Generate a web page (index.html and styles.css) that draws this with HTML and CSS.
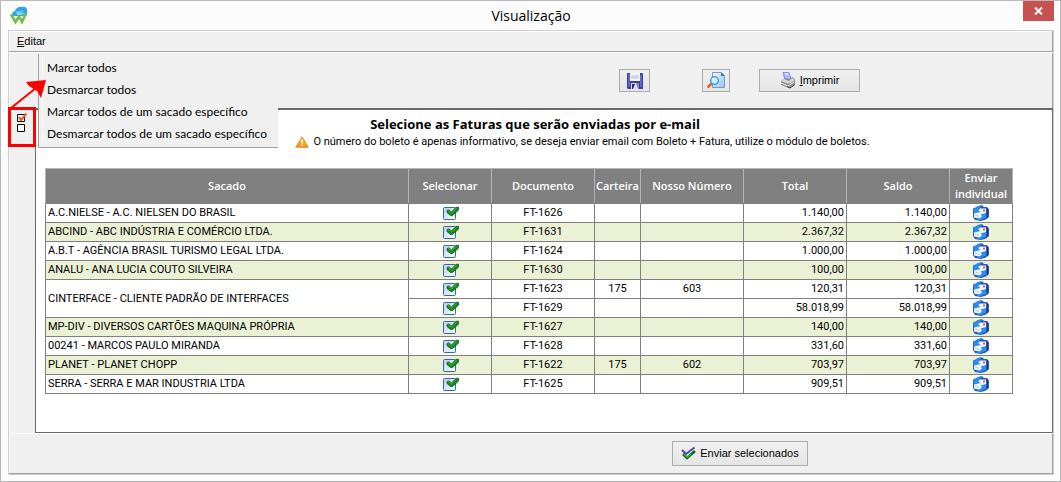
FILE: index.html
```html
<!DOCTYPE html>
<html lang="pt-BR">
<head>
    <meta charset="UTF-8">
    <meta name="viewport" content="width=device-width, initial-scale=1.0">
    <title>Visualização</title>
    <link rel="stylesheet" href="styles.css">
</head>
<body>
    <svg class="symbols" aria-hidden="true">
        <linearGradient id="box-fill" x1="0" y1="0" x2="1" y2="1">
            <stop offset="0" stop-color="#b9cdf0"/>
            <stop offset="1" stop-color="#ffffff"/>
        </linearGradient>
        <linearGradient id="warn-fill" x1="0" y1="0" x2="0" y2="1">
            <stop offset="0" stop-color="#ffc84a"/>
            <stop offset="1" stop-color="#f58a10"/>
        </linearGradient>
        <linearGradient id="page-fill" x1="0" y1="0" x2="1" y2="1">
            <stop offset="0" stop-color="#f4fbff"/>
            <stop offset="1" stop-color="#8cc4f2"/>
        </linearGradient>
        <symbol id="tick" viewBox="0 0 16 14">
            <rect x="0.5" y="1.5" width="12" height="12" rx="1" fill="url(#box-fill)" stroke="#2c6cab"/>
            <path d="M4 4.500L6 3.800L8.500 6L13 1.300H15.700V4L9.500 9.500H7.500L4 6.500Z" fill="#178a1c" stroke="#0c5c12" stroke-width=".8"/>
            <path d="M5 5L6.500 4.800L8.500 7L13.500 2.300" fill="none" stroke="#52b04c" stroke-width=".8"/>
        </symbol>
        <symbol id="mail" viewBox="0 0 16 16">
            <path d="M0 4L5 1L9 .3L11 2L14 2L15.500 4V12L13 14.500L8 16L2 15L0 12Z" fill="#2058c0"/>
            <path d="M1 6L7 3.500L13 3.500V12L8 14L1 12.500Z" fill="#eef5ff"/>
            <path d="M14 3L15.700 4.500V12L14 13.500Z" fill="#17348c"/>
            <path d="M0 2.500L2 3.500C4 1 7 0 9.500 .8C7 2 6 3.500 5.500 5.500L7.500 7L1 8.500Z" fill="#2c8cf0"/>
            <path d="M13 8V13.500L11.500 12.500C9 15.500 6 16 3 14.500C6 14 8 13 9 11L7.500 9.500Z" fill="#2c8cf0"/>
            <path d="M2 10L6 11.500" stroke="#a8c8f4"/>
            <path d="M10 4.500h2v2h-2z" fill="#e0603c"/>
        </symbol>
    </svg>
    <div class="window">
        <div class="title-bar">
            <svg class="logo" width="18" height="18" viewBox="0 0 18 18">
                <path d="M3 10C1 8 3 5 5 5C6 1 10 0 13 1C16 0 18 4 17 6C18 8 17 10 15 10Z" fill="#2fa6e4"/>
                <path d="M6 5C8 7 11 4 14 5L10 7L15 7L12 9H7Z" fill="#8ed2f5"/>
                <path d="M1 8.500L5.500 16L9 10.500L12 16L16 7" fill="none" stroke="#72bf44" stroke-width="2.600"/>
            </svg>
            <h1 class="title">Visualização</h1>
            <button class="close" type="button" aria-label="Fechar">
                <svg width="9" height="8" viewBox="0 0 9 8"><path d="M1 .5L8 7.500M8 .5L1 7.500" stroke="#fff" stroke-width="2"/></svg>
            </button>
        </div>
        <div class="frame">
            <nav class="menu-bar">
                <button class="menu-item" type="button"><u>E</u>ditar</button>
            </nav>
            <div class="toolbar">
                <button class="btn btn-save" type="button" aria-label="Salvar">
                    <svg width="16" height="16" viewBox="0 0 16 16">
                        <path d="M0 0H15L16 1V16H1L0 15Z" fill="#3c3ca8"/>
                        <path d="M1 1H3V14H1ZM13 2H15V14H13Z" fill="#6464d0"/>
                        <path d="M3 0H13V8H3Z" fill="#f4f4fa"/>
                        <path d="M4 3H12M4 5H12" stroke="#b8b8cc"/>
                        <path d="M4 10H12V16H4Z" fill="#dcdcec"/>
                        <path d="M5 11H8L6 16H5Z" fill="#28286c"/>
                        <path d="M9 10H12V16H11Z" fill="#8888b4"/>
                    </svg>
                </button>
                <button class="btn btn-preview" type="button" aria-label="Visualizar">
                    <svg width="18" height="17" viewBox="0 0 18 17">
                        <path d="M5.500 .5H14L17.500 4V15.500H5.500Z" fill="url(#page-fill)" stroke="#7796cc"/>
                        <path d="M14 0V4H18Z" fill="#3a70b8"/>
                        <path d="M4.500 11.500L0.500 15.500" stroke="#d46a1c" stroke-width="2.500"/>
                        <circle cx="7.500" cy="8.500" r="3.800" fill="#c6f0ff" stroke="#4590c8" stroke-width="1.300"/>
                        <path d="M5.500 8L8 6" stroke="#fff" stroke-width="1.500"/>
                    </svg>
                </button>
                <button class="btn btn-print" type="button">
                    <svg width="16" height="17" viewBox="0 0 16 17">
                        <path d="M3 .5H9L11 7L5 8Z" fill="#a9baf8" stroke="#7d90e4"/>
                        <path d="M4 1L8 1L9 4Z" fill="#dfe6ff"/>
                        <path d="M1 9L5 6L10 7L12 5L15 7V12L9 16L1 13Z" fill="#8c8c8c"/>
                        <path d="M1 9L4 7L9 9L12 6L15 8L9 12Z" fill="#d6d6d6"/>
                        <path d="M1 11L8 14L14 10" fill="none" stroke="#f2f2f2"/>
                        <path d="M7 14.500L10 16L15 12.500" fill="none" stroke="#333"/>
                        <path d="M8 12h2" stroke="#58b850"/>
                    </svg>
                    <span><u>I</u>mprimir</span>
                </button>
            </div>
            <div class="workspace">
                <aside class="side">
                    <button class="side-btn" type="button" aria-label="Marcar ou desmarcar">
                        <svg width="10" height="19" viewBox="0 0 10 19">
                            <path d="M.5 1.500H7.500V8.500H.5ZM.5 11.500H7.500V18.500H.5Z" fill="#fff" stroke="#000"/>
                            <path d="M2 4L4 7L9.500 .5" fill="none" stroke="#f05020" stroke-width="2"/>
                        </svg>
                    </button>
                </aside>
                <main class="report">
                    <h2 class="heading">Selecione as Faturas que serão enviadas por e-mail</h2>
                    <p class="note">
                        <svg width="14" height="12" viewBox="0 0 14 12">
                            <path d="M7 .7L13.300 11.300H.7Z" fill="url(#warn-fill)" stroke="#e8941c" stroke-linejoin="round"/>
                            <path d="M7 3.500V7.500M7 8.500V10" stroke="#fff" stroke-width="1.600"/>
                        </svg>
                        <span>O número do boleto é apenas informativo, se deseja enviar email com Boleto + Fatura, utilize o módulo de boletos.</span>
                    </p>
                    <table class="invoices">
                        <colgroup>
                            <col>
                            <col class="col-select">
                            <col class="col-value">
                            <col class="col-wallet">
                            <col class="col-value">
                            <col class="col-value">
                            <col class="col-value">
                            <col class="col-send">
                        </colgroup>
                        <thead>
                            <tr>
                                <th>Sacado</th>
                                <th>Selecionar</th>
                                <th>Documento</th>
                                <th>Carteira</th>
                                <th>Nosso Número</th>
                                <th>Total</th>
                                <th>Saldo</th>
                                <th>Enviar individual</th>
                            </tr>
                        </thead>
                        <tbody>
                            <tr>
                                <td class="name">A.C.NIELSE - A.C. NIELSEN DO BRASIL</td>
                                <td><label class="check"><input type="checkbox" checked aria-label="Selecionar FT-1626"><svg><use href="#tick"/></svg></label></td>
                                <td>FT-1626</td>
                                <td></td>
                                <td></td>
                                <td class="money">1.140,00</td>
                                <td class="money">1.140,00</td>
                                <td><button class="send" type="button" aria-label="Enviar FT-1626"><svg><use href="#mail"/></svg></button></td>
                            </tr>
                            <tr class="alt">
                                <td class="name">ABCIND - ABC INDÚSTRIA E COMÉRCIO LTDA.</td>
                                <td><label class="check"><input type="checkbox" checked aria-label="Selecionar FT-1631"><svg><use href="#tick"/></svg></label></td>
                                <td>FT-1631</td>
                                <td></td>
                                <td></td>
                                <td class="money">2.367,32</td>
                                <td class="money">2.367,32</td>
                                <td><button class="send" type="button" aria-label="Enviar FT-1631"><svg><use href="#mail"/></svg></button></td>
                            </tr>
                            <tr>
                                <td class="name">A.B.T - AGÊNCIA BRASIL TURISMO LEGAL LTDA.</td>
                                <td><label class="check"><input type="checkbox" checked aria-label="Selecionar FT-1624"><svg><use href="#tick"/></svg></label></td>
                                <td>FT-1624</td>
                                <td></td>
                                <td></td>
                                <td class="money">1.000,00</td>
                                <td class="money">1.000,00</td>
                                <td><button class="send" type="button" aria-label="Enviar FT-1624"><svg><use href="#mail"/></svg></button></td>
                            </tr>
                            <tr class="alt">
                                <td class="name">ANALU - ANA LUCIA COUTO SILVEIRA</td>
                                <td><label class="check"><input type="checkbox" checked aria-label="Selecionar FT-1630"><svg><use href="#tick"/></svg></label></td>
                                <td>FT-1630</td>
                                <td></td>
                                <td></td>
                                <td class="money">100,00</td>
                                <td class="money">100,00</td>
                                <td><button class="send" type="button" aria-label="Enviar FT-1630"><svg><use href="#mail"/></svg></button></td>
                            </tr>
                            <tr>
                                <td class="name" rowspan="2">CINTERFACE - CLIENTE PADRÃO DE INTERFACES</td>
                                <td><label class="check"><input type="checkbox" checked aria-label="Selecionar FT-1623"><svg><use href="#tick"/></svg></label></td>
                                <td>FT-1623</td>
                                <td>175</td>
                                <td>603</td>
                                <td class="money">120,31</td>
                                <td class="money">120,31</td>
                                <td><button class="send" type="button" aria-label="Enviar FT-1623"><svg><use href="#mail"/></svg></button></td>
                            </tr>
                            <tr>
                                <td><label class="check"><input type="checkbox" checked aria-label="Selecionar FT-1629"><svg><use href="#tick"/></svg></label></td>
                                <td>FT-1629</td>
                                <td></td>
                                <td></td>
                                <td class="money">58.018,99</td>
                                <td class="money">58.018,99</td>
                                <td><button class="send" type="button" aria-label="Enviar FT-1629"><svg><use href="#mail"/></svg></button></td>
                            </tr>
                            <tr class="alt">
                                <td class="name">MP-DIV - DIVERSOS CARTÕES MAQUINA PRÓPRIA</td>
                                <td><label class="check"><input type="checkbox" checked aria-label="Selecionar FT-1627"><svg><use href="#tick"/></svg></label></td>
                                <td>FT-1627</td>
                                <td></td>
                                <td></td>
                                <td class="money">140,00</td>
                                <td class="money">140,00</td>
                                <td><button class="send" type="button" aria-label="Enviar FT-1627"><svg><use href="#mail"/></svg></button></td>
                            </tr>
                            <tr>
                                <td class="name">00241 - MARCOS PAULO MIRANDA</td>
                                <td><label class="check"><input type="checkbox" checked aria-label="Selecionar FT-1628"><svg><use href="#tick"/></svg></label></td>
                                <td>FT-1628</td>
                                <td></td>
                                <td></td>
                                <td class="money">331,60</td>
                                <td class="money">331,60</td>
                                <td><button class="send" type="button" aria-label="Enviar FT-1628"><svg><use href="#mail"/></svg></button></td>
                            </tr>
                            <tr class="alt">
                                <td class="name">PLANET - PLANET CHOPP</td>
                                <td><label class="check"><input type="checkbox" checked aria-label="Selecionar FT-1622"><svg><use href="#tick"/></svg></label></td>
                                <td>FT-1622</td>
                                <td>175</td>
                                <td>602</td>
                                <td class="money">703,97</td>
                                <td class="money">703,97</td>
                                <td><button class="send" type="button" aria-label="Enviar FT-1622"><svg><use href="#mail"/></svg></button></td>
                            </tr>
                            <tr>
                                <td class="name">SERRA - SERRA E MAR INDUSTRIA LTDA</td>
                                <td><label class="check"><input type="checkbox" checked aria-label="Selecionar FT-1625"><svg><use href="#tick"/></svg></label></td>
                                <td>FT-1625</td>
                                <td></td>
                                <td></td>
                                <td class="money">909,51</td>
                                <td class="money">909,51</td>
                                <td><button class="send" type="button" aria-label="Enviar FT-1625"><svg><use href="#mail"/></svg></button></td>
                            </tr>
                        </tbody>
                    </table>
                </main>
            </div>
            <div class="footer">
                <button class="btn btn-send" type="button">
                    <svg width="15" height="13" viewBox="0 0 15 13">
                        <path d="M1 3L5 7L13.500 .5" fill="none" stroke="#4a48c0" stroke-width="2"/>
                        <path d="M2 7L6 11L14 4" fill="none" stroke="#0c6a14" stroke-width="2.600"/>
                        <path d="M2.500 6.800L6 10.300L10 7" fill="none" stroke="#34c034" stroke-width="1.200"/>
                    </svg>
                    <span>Enviar selecionados</span>
                </button>
            </div>
            <div class="popup">
                <button type="button">Marcar todos</button>
                <button type="button">Desmarcar todos</button>
                <button type="button">Marcar todos de um sacado específico</button>
                <button type="button">Desmarcar todos de um sacado específico</button>
            </div>
            <svg class="pointer" width="40" height="70" viewBox="0 0 40 70">
                <path d="M1.500 29.500H26.500V66.500H1.500Z" fill="none" stroke="#f00" stroke-width="3"/>
                <path d="M3 29L28 9" stroke="#f00" stroke-width="2"/>
                <path d="M38 1L18 3L21 7L29 12L33 19Z" fill="#f00"/>
            </svg>
        </div>
    </div>
</body>
</html>
```
FILE: styles.css
```css
* {
    box-sizing: border-box;
}
body {
    margin: 0;
    font-family: Lato, "Open Sans", sans-serif;
    color: #000;
}
button {
    margin: 0;
    padding: 0;
    border: 0;
    background: none;
    color: inherit;
    font: inherit;
}
svg {
    display: block;
    flex: none;
}
.symbols {
    position: absolute;
    width: 0;
    height: 0;
}
.window {
    display: flex;
    flex-direction: column;
    min-height: 100vh;
    padding: 0 6px 6px 7px;
    border: 1px solid #b9b9b9;
    background: #fcfcfc;
}
.title-bar {
    display: grid;
    grid-template-columns: 31px 1fr 31px;
    height: 29px;
}
.logo {
    margin: 5px 0 0 2px;
}
.title {
    margin: 0;
    font-family: "Open Sans", "Noto Sans", sans-serif;
    font-size: 14px;
    font-weight: normal;
    line-height: 29px;
    text-align: center;
}
.close {
    display: grid;
    place-items: center;
    height: 20px;
    background: #c75050;
}
.frame {
    position: relative;
    display: flex;
    flex: 1;
    flex-direction: column;
    border: 1px solid #cfcfcf;
    background: #f0f0f0;
    box-shadow: inset -1px -1px #a0a0a0, inset 1px 1px #fff;
}
.menu-bar {
    height: 21px;
    border-bottom: 1px solid #a0a0a0;
    padding: 1px 8px 0;
}
.menu-item,
.btn {
    font-family: "Liberation Sans", Arial, sans-serif;
    font-size: 11px;
    line-height: 19px;
    white-space: nowrap;
}
.menu-item {
    display: block;
}
.toolbar {
    display: flex;
    justify-content: flex-end;
    height: 56px;
    padding: 16px 193px 0 0;
    border-top: 1px solid #fff;
}
.btn {
    display: flex;
    align-items: center;
    justify-content: center;
    gap: 4px;
    height: 23px;
    border: 1px solid #acacac;
    background: linear-gradient(#f0f0f0, #e5e5e5);
}
.btn-save {
    width: 31px;
    margin-right: 52px;
}
.btn-preview {
    width: 28px;
    margin-right: 29px;
}
.btn-print {
    width: 101px;
}
.workspace {
    display: flex;
    flex: 1;
}
.side {
    width: 26px;
    padding: 5px 0 0 8px;
}
.side-btn {
    display: block;
}
.report {
    flex: 1;
    padding: 5px 39px 38px 9px;
    border: 1px solid #696969;
    border-top-width: 2px;
    background: #fff;
}
.heading {
    margin: 0;
    padding-left: 12px;
    font-family: "Open Sans", "Noto Sans", sans-serif;
    font-size: 13px;
    line-height: 18px;
    text-align: center;
}
.note {
    display: flex;
    align-items: center;
    justify-content: center;
    gap: 4px;
    margin: 0 0 17px;
    padding-left: 107px;
    font-family: Roboto, sans-serif;
    font-size: 11px;
    line-height: 18px;
    white-space: nowrap;
}
.invoices {
    width: 100%;
    table-layout: fixed;
    border-collapse: collapse;
    font-family: Roboto, sans-serif;
    font-size: 11px;
    line-height: 16px;
}
.col-select {
    width: 83px;
}
.col-value {
    width: 103px;
}
.col-wallet {
    width: 46px;
}
.col-send {
    width: 63px;
}
.invoices th {
    height: 35px;
    padding: 0;
    border: 1px solid #b4b4b4;
    border-bottom-color: #808080;
    background: #808080;
    color: #fff;
    font-family: "Open Sans", "Noto Sans", sans-serif;
    font-weight: 600;
}
.invoices td {
    height: 19px;
    padding: 0 2px;
    border: 1px solid #808080;
    text-align: center;
    white-space: nowrap;
}
.invoices .name {
    text-align: left;
}
.invoices .money {
    text-align: right;
}
.alt {
    background: #eaf1d5;
}
.check {
    display: grid;
    justify-content: center;
    padding-left: 2px;
}
.check input,
.check svg {
    grid-area: 1 / 1;
    width: 16px;
    height: 14px;
    margin: 0;
}
.check input {
    appearance: none;
}
.send {
    display: block;
    margin: 0 auto;
}
.send svg {
    width: 16px;
    height: 16px;
}
.footer {
    display: flex;
    justify-content: flex-end;
    height: 41px;
    padding: 7px 245px 0 0;
    border-top: 1px solid #fff;
}
.btn-send {
    width: 136px;
    height: 25px;
}
.popup {
    position: absolute;
    top: 23px;
    left: 29px;
    display: flex;
    flex-direction: column;
    width: 240px;
    padding: 3px 0 2px;
    border-left: 1px solid #a0a0a0;
    border-bottom: 1px solid #a0a0a0;
    background: #f0f0f0;
}
.popup button {
    padding-left: 4px;
    margin-left: 3px;
    border-left: 1px solid #fff;
    font-size: 12px;
    line-height: 22px;
    text-align: left;
    white-space: nowrap;
}
.pointer {
    position: absolute;
    top: 48px;
    left: -1px;
    pointer-events: none;
}
```
